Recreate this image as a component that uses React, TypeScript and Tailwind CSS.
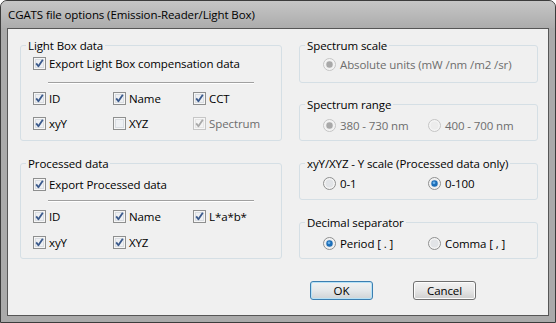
import React from "react"

function CheckBox({ checked = false, disabled = false }: { checked?: boolean; disabled?: boolean }) {
  const border = disabled ? "#c6c6c6" : "#8e8f8f"
  const inner = disabled ? "#e6e6e6" : "#d9dde2"
  const tick = disabled ? "#a9a9a9" : "#3b5a8c"
  return (
    <svg width="13" height="13" viewBox="0 0 13 13" className="shrink-0">
      <rect x="0.5" y="0.5" width="12" height="12" fill="#f6f6f6" stroke={border} />
      <rect x="2.5" y="2.5" width="8" height="8" fill={disabled ? "#f4f4f4" : "#eef0f3"} stroke={inner} />
      {checked && (
        <path d="M3.2 6.4 L5.4 9.3 L9.8 2.8" fill="none" stroke={tick} strokeWidth="1.8" strokeLinejoin="round" />
      )}
    </svg>
  )
}

function Radio({ checked = false, disabled = false }: { checked?: boolean; disabled?: boolean }) {
  const border = disabled ? "#c4c4c4" : "#8e8f8f"
  return (
    <svg width="13" height="13" viewBox="0 0 13 13" className="shrink-0">
      <circle cx="6.5" cy="6.5" r="6" fill="#f4f4f4" stroke={border} />
      <circle cx="6.5" cy="6.5" r="4" fill={disabled ? "#ececec" : "#e2e4e7"} />
      {checked && !disabled && (
        <>
          <circle cx="6.5" cy="6.5" r="3.2" fill="#1c6eb8" />
          <circle cx="6" cy="5.8" r="1.4" fill="#6db3ea" />
        </>
      )}
      {checked && disabled && <circle cx="6.5" cy="6.5" r="3.2" fill="#a8a8a8" />}
    </svg>
  )
}

function Check({ label, checked, disabled }: { label: string; checked?: boolean; disabled?: boolean }) {
  return (
    <div className="flex h-[13px] items-center gap-[3px]">
      <CheckBox checked={checked} disabled={disabled} />
      <span className={`leading-[13px] ${disabled ? "text-[#6d6d6d]" : "text-black"}`}>{label}</span>
    </div>
  )
}

function Option({ label, checked, disabled }: { label: string; checked?: boolean; disabled?: boolean }) {
  return (
    <div className="flex h-[13px] items-center gap-[4px]">
      <Radio checked={checked} disabled={disabled} />
      <span className={`leading-[13px] ${disabled ? "text-[#6d6d6d]" : "text-black"}`}>{label}</span>
    </div>
  )
}

function Group({ title, className = "", children }: { title: string; className?: string; children: React.ReactNode }) {
  return (
    <fieldset className={`rounded-[3px] border border-[#d5dfe5] ${className}`}>
      <legend className="ml-[5px] px-[2px] leading-[15px]">{title}</legend>
      {children}
    </fieldset>
  )
}

function Sep() {
  return <div className="ml-[15px] h-px w-[206px] bg-[#a0a0a0] shadow-[0_1px_0_#ffffff]" />
}

export default function App() {
  return (
    <div className="flex h-[323px] w-[556px] flex-col rounded-t-[7px] border border-[#3c3c3c] bg-[#aaaaaa] font-['Open_Sans','Noto_Sans',sans-serif] text-[11.5px] tracking-[-0.1px] text-black">
      <div className="flex h-[27px] items-center rounded-t-[6px] bg-gradient-to-b from-[#c6c6c6] to-[#acacac] pl-[7px]">
        <span className="leading-[16px]">CGATS file options (Emission-Reader/Light Box)</span>
      </div>
      <div className="mx-[6px] mb-[6px] flex-1 border border-[#565656] bg-[#f0f0f0]">
        <div className="flex gap-[17px] pl-[12px] pt-[9px]">
          <div className="flex w-[262px] flex-col gap-[15px]">
            <Group title="Light Box data" className="h-[103px]">
              <div className="flex flex-col pl-[12px]">
                <div className="mt-[4px]">
                  <Check label="Export Light Box compensation data" checked />
                </div>
                <div className="mt-[12px]">
                  <Sep />
                </div>
                <div className="mt-[9px] grid grid-cols-[80px_80px_80px] gap-y-[12px]">
                  <Check label="ID" checked />
                  <Check label="Name" checked />
                  <Check label="CCT" checked />
                  <Check label="xyY" checked />
                  <Check label="XYZ" />
                  <Check label="Spectrum" checked disabled />
                </div>
              </div>
            </Group>
            <Group title="Processed data" className="h-[103px]">
              <div className="flex flex-col pl-[12px]">
                <div className="mt-[7px]">
                  <Check label="Export Processed data" checked />
                </div>
                <div className="mt-[9px]">
                  <Sep />
                </div>
                <div className="mt-[9px] grid grid-cols-[80px_80px_80px] gap-y-[13px]">
                  <Check label="ID" checked />
                  <Check label="Name" checked />
                  <Check label="L*a*b*" checked />
                  <Check label="xyY" checked />
                  <Check label="XYZ" checked />
                </div>
              </div>
            </Group>
          </div>
          <div className="flex w-[239px] flex-col">
            <Group title="Spectrum scale" className="h-[45px]">
              <div className="mt-[5px] pl-[23px]">
                <Option label="Absolute units (mW /nm /m2 /sr)" checked disabled />
              </div>
            </Group>
            <Group title="Spectrum range" className="mt-[14px] h-[44px]">
              <div className="mt-[7px] grid grid-cols-[105px_105px] pl-[23px]">
                <Option label="380 - 730 nm" checked disabled />
                <Option label="400 - 700 nm" disabled />
              </div>
            </Group>
            <Group title="xyY/XYZ - Y scale (Processed data only)" className="mt-[15px] h-[44px]">
              <div className="mt-[6px] grid grid-cols-[105px_105px] pl-[23px]">
                <Option label="0-1" />
                <Option label="0-100" checked />
              </div>
            </Group>
            <Group title="Decimal separator" className="mt-[15px] h-[44px]">
              <div className="mt-[7px] grid grid-cols-[105px_105px] pl-[23px]">
                <Option label="Period [ . ]" checked />
                <Option label="Comma [ , ]" />
              </div>
            </Group>
          </div>
        </div>
        <div className="mt-[22px] flex gap-[40px] pl-[302px]">
          <button className="h-[19px] w-[63px] rounded-[3px] border border-[#3c7fb1] bg-gradient-to-b from-[#f2f2f2] via-[#e4e8ea] to-[#cfd3d6] leading-[17px] shadow-[inset_0_0_0_1px_#b6e2f7]">
            OK
          </button>
          <button className="h-[19px] w-[63px] rounded-[3px] border border-[#707070] bg-gradient-to-b from-[#f2f2f2] via-[#e6e6e6] to-[#cfcfcf] leading-[17px] shadow-[inset_0_0_0_1px_#fcfcfc]">
            Cancel
          </button>
        </div>
      </div>
    </div>
  )
}
